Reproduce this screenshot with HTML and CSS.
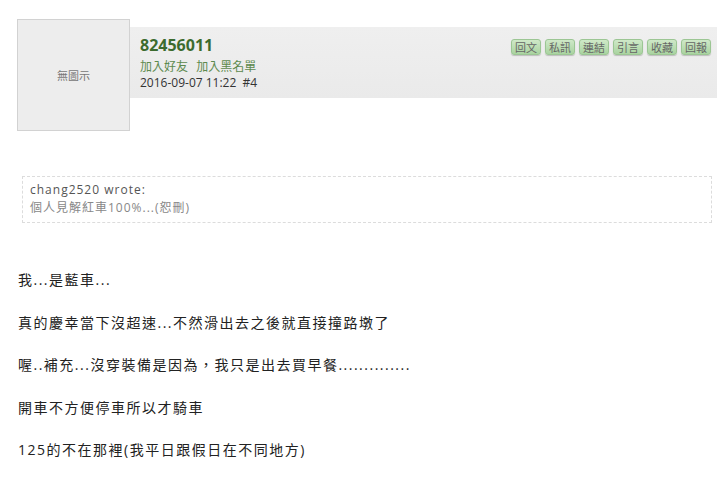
FILE: index.html
```html
<!DOCTYPE html>
<html lang="zh-Hant">
<head>
    <meta charset="UTF-8">
    <meta name="viewport" content="width=device-width, initial-scale=1.0">
    <title>82456011 #4</title>
    <link rel="stylesheet" href="styles.css">
</head>
<body>
    <div class="post">
        <div class="post-head">
            <div class="avatar">無圖示</div>
            <div class="head-bar">
                <div class="author">
                    <div class="name">82456011</div>
                    <div class="links">
                        <a href="#">加入好友</a>
                        <a href="#">加入黑名單</a>
                    </div>
                    <div class="date">2016-09-07 11:22&nbsp;&nbsp;#4</div>
                </div>
                <div class="actions">
                    <button>回文</button>
                    <button>私訊</button>
                    <button>連結</button>
                    <button>引言</button>
                    <button>收藏</button>
                    <button>回報</button>
                </div>
            </div>
        </div>

        <blockquote class="quote">
            <div class="quote-who">chang2520 wrote:</div>
            <div class="quote-text">個人見解紅車100%...(恕刪)</div>
        </blockquote>

        <div class="content">
            <p>我...是藍車...</p>
            <p>真的慶幸當下沒超速...不然滑出去之後就直接撞路墩了</p>
            <p>喔..補充...沒穿裝備是因為，我只是出去買早餐..............</p>
            <p>開車不方便停車所以才騎車</p>
            <p>125的不在那裡(我平日跟假日在不同地方)</p>
        </div>
    </div>
</body>
</html>
```

FILE: styles.css
```css
body {
    margin: 0;
    background: #fff;
    font-family: "Open Sans", "Noto Sans CJK TC", sans-serif;
    color: #333;
}

.post-head {
    display: flex;
    align-items: flex-start;
}

.avatar {
    box-sizing: border-box;
    width: 113px;
    height: 112px;
    margin: 19px 0 0 17px;
    border: 1px solid #d2d2d2;
    background: #ededed;
    display: flex;
    justify-content: center;
    align-items: center;
    font-size: 11px;
    color: #777;
}

.head-bar {
    flex: 1;
    height: 71px;
    margin: 27px 3px 0 0;
    padding: 7px 6px 0 10px;
    box-sizing: border-box;
    background: linear-gradient(#efefef, #eaeaea);
    display: flex;
    justify-content: space-between;
    align-items: flex-start;
}

.name {
    font-size: 16px;
    font-weight: bold;
    color: #3c6b2e;
    line-height: 22px;
}

.links {
    margin-top: 3px;
    font-size: 12px;
    line-height: 16px;
}

.links a {
    color: #5d8a4e;
    text-decoration: none;
    margin-right: 5px;
}

.date {
    font-size: 12px;
    line-height: 15px;
    color: #333;
}

.actions {
    display: flex;
    gap: 4px;
    margin-top: 5px;
}

.actions button {
    height: 16px;
    padding: 0 3px;
    font-family: "Noto Sans CJK TC", sans-serif;
    font-size: 11px;
    line-height: 14px;
    color: #666;
    background: linear-gradient(#cfe8c8, #a9d3a0);
    border: 1px solid #9cc694;
    border-radius: 3px;
    box-shadow: 0 1px 1px rgba(0, 0, 0, 0.2);
}

.quote {
    margin: 45px 8px 0 22px;
    padding: 4px 7px 5px;
    border: 1px dashed #dcdcdc;
    font-size: 12px;
    letter-spacing: 1px;
    line-height: 18px;
}

.quote-who {
    color: #555;
}

.quote-text {
    color: #888;
}

.content {
    margin: 46px 0 0 18px;
    font-size: 14px;
    letter-spacing: 1.5px;
    color: #222;
}

.content p {
    margin: 0 0 21.5px;
    line-height: 21px;
}
```
